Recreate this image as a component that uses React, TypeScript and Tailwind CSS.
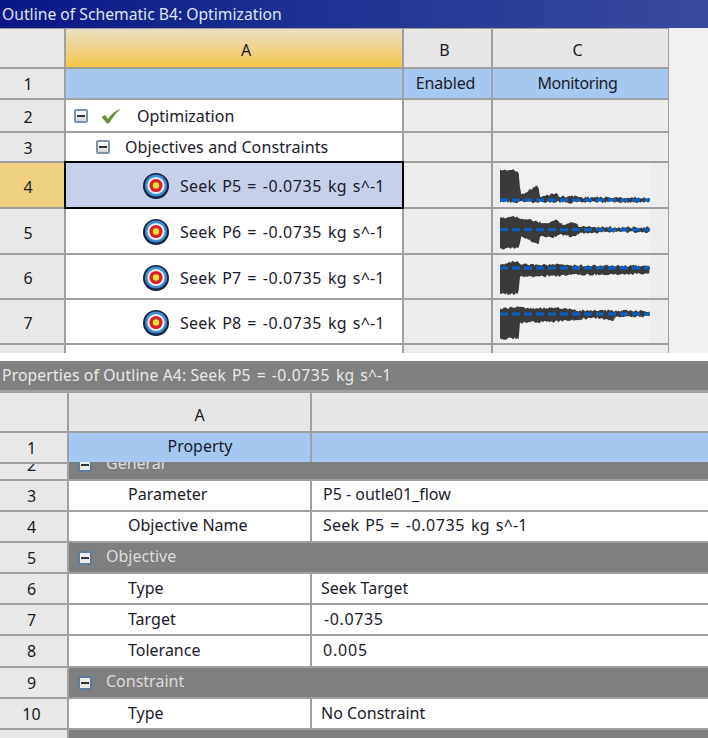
import React from "react";

const font = "font-['Noto_Sans','Open_Sans',sans-serif]";

function Minus({ dark }: { dark?: boolean }) {
  return (
    <span className={`inline-flex w-[14px] h-[14px] shrink-0 items-center justify-center rounded-[2px] border-2 ${dark ? "border-[#5f7d9a] bg-[#ececec]" : "border-[#7d93a8] bg-gradient-to-b from-[#ffffff] to-[#d8d8d8]"}`}>
      <span className="block w-[8px] h-[2px] bg-[#333333]" />
    </span>
  );
}

function Check() {
  return (
    <svg width="20" height="16" viewBox="0 0 20 16" className="shrink-0">
      <path d="M0.5 9 L4 7 L7 11 C10 6.5 14 3 19.5 0.5 C15 5 11.5 9.5 8 15.5 L6 15.5 Z" fill="#6b8e3a" />
    </svg>
  );
}

function Target() {
  return (
    <svg width="28" height="28" viewBox="0 0 28 28" className="shrink-0">
      <circle cx="14" cy="14" r="13" fill="#15233f" />
      <circle cx="14" cy="13.5" r="11" fill="#3f8fd0" />
      <circle cx="14" cy="13.5" r="8.6" fill="#f0f0f0" />
      <circle cx="14" cy="13.5" r="6.6" fill="#d8232a" />
      <circle cx="14" cy="13.5" r="3.2" fill="#e6e23a" />
    </svg>
  );
}

type P = [number, number];

function interp(line: P[], x: number) {
  for (let i = 0; i < line.length - 1; i++) {
    const [x0, y0] = line[i];
    const [x1, y1] = line[i + 1];
    if (x >= x0 && x <= x1) return y0 + ((y1 - y0) * (x - x0)) / (x1 - x0 || 1);
  }
  return line[line.length - 1][1];
}

function shape(top: P[], bottom: P[], seed: number) {
  const pts: string[] = [];
  const jitter = (i: number) => {
    const s = Math.sin(i * 12.9898 + seed * 78.233) * 43758.5453;
    return (s - Math.floor(s) - 0.5) * 7;
  };
  const xs: number[] = [];
  for (let x = 0; x <= 450; x += 4) xs.push(x);
  xs.forEach((x, i) => pts.push(`${x},${interp(top, x) + jitter(i)}`));
  [...xs].reverse().forEach((x, i) => pts.push(`${x},${interp(bottom, x) + jitter(i + 500)}`));
  return pts.join(" ");
}

const charts: { top: P[]; bottom: P[]; blue: number }[] = [
  {
    top: [[0, 18], [40, 18], [58, 26], [61, 94], [115, 62], [118, 100], [170, 86], [175, 98], [230, 96], [240, 100], [280, 100], [450, 102]],
    bottom: [[0, 114], [200, 114], [210, 117], [220, 114], [450, 114]],
    blue: 108,
  },
  {
    top: [[0, 26], [40, 18], [60, 24], [110, 34], [130, 42], [170, 30], [190, 44], [225, 36], [235, 48], [330, 52], [450, 52]],
    bottom: [[0, 116], [58, 114], [62, 78], [115, 103], [120, 80], [170, 82], [175, 74], [225, 80], [240, 70], [330, 66], [450, 66]],
    blue: 59,
  },
  {
    top: [[0, 28], [20, 20], [50, 16], [60, 26], [170, 26], [230, 28], [450, 30]],
    bottom: [[0, 114], [55, 114], [60, 62], [170, 60], [230, 56], [340, 56], [450, 52]],
    blue: 36,
  },
  {
    top: [[0, 24], [50, 18], [110, 22], [170, 20], [230, 28], [450, 30]],
    bottom: [[0, 114], [58, 112], [60, 64], [170, 62], [230, 56], [280, 50], [340, 58], [350, 48], [450, 46]],
    blue: 39,
  },
];

function Chart({ i }: { i: number }) {
  const c = charts[i];
  return (
    <svg width="150" height="42" viewBox="0 0 450 126" className="block bg-[#f1f1f1]">
      <polygon points={shape(c.top, c.bottom, i + 1)} fill="#3a3a3a" />
      <line x1="0" y1={c.blue} x2="450" y2={c.blue} stroke="#0b62c4" strokeWidth="9" strokeDasharray="24 12" />
    </svg>
  );
}

function RowHead({ n, active, cls }: { n?: string; active?: boolean; cls: string }) {
  return (
    <div className={`flex items-center justify-center ${cls} ${active ? "bg-[#f0d180]" : "bg-[#e8e8e8]"} text-[#1a1a1a]`}>{n}</div>
  );
}

function Seek({ p }: { p: string }) {
  return (
    <span className="[word-spacing:1.6px] tracking-[0.2px]">
      Seek {p} = <span className="tracking-[0.6px]">-0.0735</span> kg s^-1
    </span>
  );
}

function Outline() {
  return (
    <div className="bg-[#f0f0f0]">
      <div className="h-[28px] flex items-center pl-[2px] pt-[1px] text-[15.7px] text-[#dfe5f2] bg-gradient-to-r from-[#0a1686] to-[#3b4a9f]">
        Outline of Schematic B4: Optimization
      </div>
      <div className="w-[669px] bg-[#a0a0a0] pt-[1px] pr-[1px] grid grid-cols-[64px_336px_87px_175px] gap-[2px] grid-rows-[38px_29px_31px_28px_44px_44px_43px_43px_8px] text-[#1a1a2a]">
        <div className="bg-[#e8e8e8]" />
        <div className="flex items-center justify-center pt-[4px] pl-[24px] bg-gradient-to-b from-[#e9dfc0] to-[#f6c646]">A</div>
        <div className="flex items-center justify-center pt-[4px] pr-[6px] bg-[#e6e6e6]">B</div>
        <div className="flex items-center justify-center pt-[4px] pr-[6px] bg-[#e6e6e6]">C</div>

        <RowHead n="1" cls="pr-[8px]" />
        <div className="bg-[#a6c8f0]" />
        <div className="flex items-center justify-center pr-[4px] pb-[2px] tracking-[-0.15px] bg-[#a6c8f0]">Enabled</div>
        <div className="flex items-center justify-center pr-[6px] pb-[2px] tracking-[-0.4px] bg-[#a6c8f0]">Monitoring</div>

        <RowHead n="2" cls="pr-[8px] pt-[2px]" />
        <div className="flex items-center bg-white pl-[8px] text-[#1a1a2a]">
          <Minus />
          <span className="ml-[13px]"><Check /></span>
          <span className="ml-[16px]">Optimization</span>
        </div>
        <div className="bg-[#ececec]" />
        <div className="bg-[#ececec]" />

        <RowHead n="3" cls="pr-[8px] pt-[2px]" />
        <div className="flex items-center bg-white pl-[30px]">
          <Minus />
          <span className="ml-[15px] tracking-[0.1px]">Objectives and Constraints</span>
        </div>
        <div className="bg-[#ececec]" />
        <div className="bg-[#ececec]" />

        {["P5", "P6", "P7", "P8"].map((p, i) => (
          <React.Fragment key={p}>
            <RowHead n={String(i + 4)} active={i === 0} cls="pr-[8px] pt-[3px]" />
            <div className={`flex items-center pl-[76px] pt-[2px] ${i === 0 ? "bg-[#c6d0e8] outline-2 outline-black z-10" : "bg-white"}`}>
              <Target />
              <span className="ml-[10px]"><Seek p={p} /></span>
            </div>
            <div className="bg-[#ececec]" />
            <div className="bg-[#ececec] pl-[7px] flex items-center"><Chart i={i} /></div>
          </React.Fragment>
        ))}

        <div className="bg-[#e8e8e8]" />
        <div className="bg-white" />
        <div className="bg-[#ececec]" />
        <div className="bg-[#ececec]" />
      </div>
      <div className="h-[8px] bg-white" />
    </div>
  );
}

function Sect({ label, n }: { label: string; n: string }) {
  return (
    <>
      <RowHead n={n} cls="pr-[4px]" />
      <div className="col-span-2 flex items-center bg-[#7f7f7f] pl-[9px] text-[#dcdcdc]">
        <Minus dark />
        <span className="ml-[14px] pb-[3px]">{label}</span>
      </div>
    </>
  );
}

function Prop({ n, label, value, pad, tall }: { n: string; label: string; value: React.ReactNode; pad: string; tall?: boolean }) {
  const lift = tall ? "pb-[1px]" : "pb-[3px]";
  return (
    <>
      <RowHead n={n} cls="pr-[4px]" />
      <div className={`flex items-center bg-white pl-[59px] ${lift}`}>{label}</div>
      <div className={`flex items-center bg-white ${lift} ${pad}`}>{value}</div>
    </>
  );
}

function Properties() {
  return (
    <div>
      <div className="h-[29px] flex items-center pl-[2px] pt-[1px] text-[15.7px] tracking-[0.14px] text-[#e8e8e8] bg-[#808080]">
        <span>Properties of Outline A4: <Seek p="P5" /></span>
      </div>
      <div className="bg-[#a0a0a0] pt-[3px] h-[348px] overflow-hidden grid grid-cols-[67px_241px_396px] gap-[2px] grid-rows-[38px_29px_15px_29px_29px_29px_29px_29px_30px_29px_29px_20px] text-[#1a1a2a]">
        <div className="bg-[#e8e8e8]" />
        <div className="flex items-center justify-center pt-[6px] pl-[20px] bg-[#e6e6e6]">A</div>
        <div className="bg-[#e6e6e6]" />

        <RowHead n="1" cls="pr-[4px]" />
        <div className="flex items-center justify-center pl-[21px] bg-[#a6c8f0] pb-[3px]">Property</div>
        <div className="bg-[#a6c8f0]" />

        <div className="bg-[#e8e8e8] overflow-hidden flex flex-col justify-end items-center pr-[4px]">
          <div className="h-[29px] shrink-0 flex items-center">2</div>
        </div>
        <div className="col-span-2 bg-[#7f7f7f] overflow-hidden flex flex-col justify-end -mt-[2px]">
          <div className="h-[29px] shrink-0 flex items-center pl-[9px] text-[#dcdcdc]">
            <Minus dark />
            <span className="ml-[14px] pb-[3px]">General</span>
          </div>
        </div>

        <Prop n="3" label="Parameter" value="P5 - outle01_flow" pad="pl-[11px]" />
        <Prop n="4" label="Objective Name" value={<Seek p="P5" />} pad="pl-[11px]" />
        <Sect n="5" label="Objective" />
        <Prop n="6" label="Type" value="Seek Target" pad="pl-[9px]" tall />
        <Prop n="7" label="Target" value={<span className="tracking-[0.6px]">-0.0735</span>} pad="pl-[12px]" tall />
        <Prop n="8" label="Tolerance" value={<span className="tracking-[0.8px]">0.005</span>} pad="pl-[11px]" />
        <Sect n="9" label="Constraint" />
        <Prop n="10" label="Type" value="No Constraint" pad="pl-[9px]" tall />

        <div className="bg-[#e8e8e8]" />
        <div className="col-span-2 bg-[#7f7f7f]" />
      </div>
    </div>
  );
}

export default function App() {
  return (
    <div className={`w-[708px] h-[738px] overflow-hidden bg-white text-[16px] leading-none ${font}`}>
      <Outline />
      <Properties />
    </div>
  );
}
